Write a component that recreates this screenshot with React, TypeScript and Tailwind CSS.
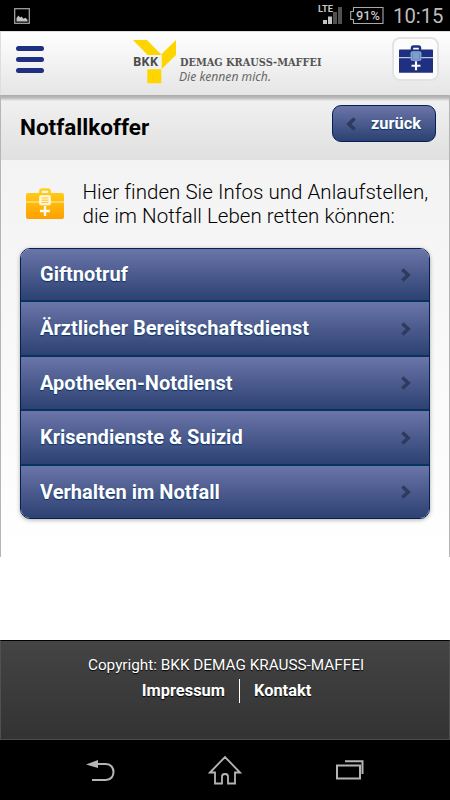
import React from "react";

const items = [
  { label: "Giftnotruf", size: "h-[53px]", lift: "pb-[2px]" },
  { label: "Ärztlicher Bereitschaftsdienst", size: "h-[55px]", lift: "pb-[2px]" },
  { label: "Apotheken-Notdienst", size: "h-[54px]", lift: "pb-0" },
  { label: "Krisendienste & Suizid", size: "h-[55px]", lift: "pb-[2px]" },
  { label: "Verhalten im Notfall", size: "h-[52px]", lift: "pb-0" },
];

function StatusBar() {
  return (
    <div className="flex h-[31px] shrink-0 items-start bg-black text-[#bdbdbd]">
      <svg className="ml-[14px] mt-[8px]" width="16" height="16" viewBox="0 0 16 16">
        <rect x="0.7" y="0.7" width="14.6" height="14.6" fill="none" stroke="#aaa" strokeWidth="1.2" />
        <path d="M2.5 13.5V10l2-2.5L6 9.5l1.5-1 2 2.2 2-1 2 2v1.8z" fill="#c4c4c4" />
      </svg>
      <svg className="ml-auto mt-[4px]" width="26" height="21" viewBox="0 0 26 21">
        <text x="1" y="8" fontFamily="Roboto" fontWeight="700" fontSize="9.5" textLength="15" lengthAdjust="spacingAndGlyphs" fill="#c8c8c8">LTE</text>
        <path d="M6 16h4v4H6z M11 12.5h4V20h-4z" fill="#c4c4c4" />
        <path d="M16 8h4v12h-4z M21 3h4v17h-4z" fill="#515151" />
      </svg>
      <svg className="ml-[6px] mt-[6px]" width="36" height="19" viewBox="0 0 36 19">
        <path d="M4.5 1.5H34v16H4.5v-4H1.7v-8h2.8z" fill="none" stroke="#aaa" strokeWidth="1.1" />
        <text x="7" y="14" fontFamily="Roboto" fontWeight="500" fontSize="13" textLength="24" lengthAdjust="spacingAndGlyphs" fill="#c8c8c8">91%</text>
      </svg>
      <div className="ml-[8px] mr-[7px] mt-[4px] w-[50px] whitespace-nowrap text-[20.3px] leading-[24px]">10:15</div>
    </div>
  );
}

function Suitcase({ gold = false }: { gold?: boolean }) {
  const fill = gold ? "url(#gold)" : "#203080";
  return (
    <svg width={gold ? 38 : 34} height={gold ? 31 : 28} viewBox="0 0 38 31">
      <defs>
        <linearGradient id="gold" x1="0" y1="0" x2="0" y2="31" gradientUnits="userSpaceOnUse">
          <stop stopColor="#ffd31c" />
          <stop offset="1" stopColor="#ff9f00" />
        </linearGradient>
      </defs>
      <path d="M14.5 6V3.2q0-1.7 1.7-1.7h5.6q1.7 0 1.7 1.7V6" fill="none" stroke={fill} strokeWidth="2.7" />
      <rect y="5" width="38" height="26" rx={gold ? 2 : 0.8} fill={fill} />
      <path d="M0 13.4h13v1.2H0zM25 13.4h13v1.2H25z" fill={gold ? "#fff1b3" : "#b9c8e8"} />
      <rect x="13.5" y="7.5" width="11" height="9.5" rx="1.2" fill={gold ? "#fff8df" : "#6788be"} stroke={gold ? "#fff4c5" : "#c6d2ee"} strokeWidth=".8" />
      <path d="M15.5 10h7M15.5 12.2h7M15.5 14.4h7" stroke={gold ? "#ffc126" : "#9dbbe0"} strokeWidth="1" />
      <path d="M17.8 18h2.4v3.8H24v2.4h-3.8V28h-2.4v-3.8H14v-2.4h3.8z" fill={gold ? "#fffbe9" : "#fff"} />
    </svg>
  );
}

function Logo() {
  return (
    <svg className="overflow-visible" width="200" height="50" viewBox="0 0 200 50">
      <path d="M0 2h14l14.7 15h-14z M28.7 16 43 2v15L28.7 31z M14.3 31.3h14v14h-14z" fill="#ffd500" />
      <text x="0" y="28" fontFamily="Noto Sans" fontWeight="700" fontSize="11.6" textLength="25" lengthAdjust="spacingAndGlyphs" fill="#4b4b4b">BKK</text>
      <text x="47" y="28" fontFamily="DejaVu Serif" fontWeight="700" fontSize="11.8" textLength="141.5" lengthAdjust="spacingAndGlyphs" fill="#555">DEMAG KRAUSS-MAFFEI</text>
      <text x="46" y="42.5" fontFamily="Noto Sans" fontStyle="italic" fontSize="12" textLength="92" lengthAdjust="spacingAndGlyphs" fill="#686868">Die kennen mich.</text>
    </svg>
  );
}

function Header() {
  return (
    <header className="flex h-[64px] shrink-0 items-start border-l border-t border-[#dedede] bg-linear-to-b from-[#ffffff] to-[#e5e5e5]">
      <button aria-label="Menü" className="ml-[15px] mt-[14px] flex w-[28px] flex-col gap-[6px]">
        <span className="h-[5px] rounded-full bg-[#203080]" />
        <span className="h-[5px] rounded-full bg-[#203080]" />
        <span className="h-[5px] rounded-full bg-[#203080]" />
      </button>
      <div className="ml-[89px] mt-[6px]"><Logo /></div>
      <button aria-label="Notfallkoffer" className="ml-auto mr-[11px] mt-[5px] flex h-[44px] w-[47px] items-center justify-center rounded-[8px] border-2 border-[#e3e3e3] bg-[#fcfcfc]">
        <Suitcase />
      </button>
    </header>
  );
}

function Chevron({ left = false }: { left?: boolean }) {
  return (
    <svg width="10" height="14" viewBox="0 0 10 14">
      <path d={left ? "M8.6 1.4 2.8 7l5.8 5.6" : "M1.4 1.4 7.2 7l-5.8 5.6"} fill="none" stroke="#2e3a5e" strokeWidth="3.5" />
    </svg>
  );
}

export default function App() {
  return (
    <main className="flex h-[800px] w-[450px] flex-col overflow-hidden bg-white font-[Roboto,sans-serif]">
      <StatusBar />
      <Header />
      <section className="flex h-[462px] shrink-0 flex-col border-x border-[#b5b5b5] bg-linear-to-b from-[#f1f1f1] to-white">
        <div className="h-[6px] shrink-0 bg-linear-to-b from-[#aaaaaa] via-[#bcbcbc] to-[#eeeeee]" />
        <div className="flex h-[59px] shrink-0 items-start bg-linear-to-b from-[#f0f0f0] to-[#e0e0e0]">
          <h1 className="ml-[19px] mt-[13px] whitespace-nowrap text-[22.5px] font-bold leading-[26px] text-black">Notfallkoffer</h1>
          <button className="ml-auto mr-[13px] mt-[4px] flex h-[37px] w-[104px] items-center rounded-[9px] border border-[#052052] bg-linear-to-b from-[#6b75a8] to-[#2d4173] pl-[13px] text-[16.4px] font-bold text-white [text-shadow:0_1px_1px_#053369]">
            <Chevron left />
            <span className="ml-[15px] pt-[2px]">zurück</span>
          </button>
        </div>
        <div className="flex h-[88px] shrink-0 items-start">
          <div className="ml-[25px] mt-[28px]"><Suitcase gold /></div>
          <p className="ml-[18.5px] mt-[20px] whitespace-nowrap text-[20.5px] font-light leading-[24px] tracking-[0.03px] text-black">
            Hier finden Sie Infos und Anlaufstellen,<br />die im Notfall Leben retten können:
          </p>
        </div>
        <ul className="mx-[19px] shrink-0 overflow-hidden rounded-[10px] border border-[#052052] text-[20px] font-bold text-white shadow-[0_1px_4px_#00000050]">
          {items.map((item, index) => (
            <li key={item.label} className={`${item.size} flex items-center justify-between bg-linear-to-b from-[#6b75a8] to-[#2d4173] pl-[19px] pr-[18px] ${index < items.length - 1 ? "border-b-2 border-[#053460]" : ""}`}>
              <span className={`${item.lift} whitespace-nowrap [text-shadow:0_1px_1px_#053369]`}>{item.label}</span>
              <Chevron />
            </li>
          ))}
        </ul>
      </section>
      <div className="h-[83px] shrink-0" />
      <footer className="flex h-[100px] shrink-0 flex-col items-center border border-t-black border-x-[#505050] border-b-[#4c4c4c] bg-linear-to-b from-[#444444] to-[#333333] text-white [text-shadow:0_1px_1px_#000]">
        <p className="ml-[2px] mt-[14px] whitespace-nowrap text-[15.3px] leading-[20px]">Copyright: BKK DEMAG KRAUSS-MAFFEI</p>
        <div className="ml-[3px] mt-[4px] flex h-[24px] items-center text-[16.4px] font-bold">
          <span className="pr-[14px]">Impressum</span>
          <span className="h-[24px] w-px bg-white" />
          <span className="pl-[14px]">Kontakt</span>
        </div>
      </footer>
      <nav className="flex h-[60px] shrink-0 items-start bg-black">
        <svg className="ml-[86px] mt-[19px]" width="30" height="23" viewBox="0 0 30 23">
          <path d="M0 5.5 12 1v8z" fill="#b5b5b5" />
          <path d="M10 5H20c10 0 10 16 0 16H6" fill="none" stroke="#b5b5b5" strokeWidth="2" />
        </svg>
        <svg className="ml-[92px] mt-[15px]" width="34" height="31" viewBox="0 0 34 31">
          <path d="M2 17.5 17 2l15 15.5h-5v11h-7v-7q0-2.5-3-2.5t-3 2.5v7H7v-11z" fill="none" stroke="#b5b5b5" strokeWidth="1.8" />
        </svg>
        <svg className="ml-[93px] mt-[19px]" width="30" height="22" viewBox="0 0 30 22">
          <path d="M2 6.5h23V19.5H2z M10 2.3h17.5V15" fill="none" stroke="#b5b5b5" strokeWidth="2" />
        </svg>
      </nav>
    </main>
  );
}
